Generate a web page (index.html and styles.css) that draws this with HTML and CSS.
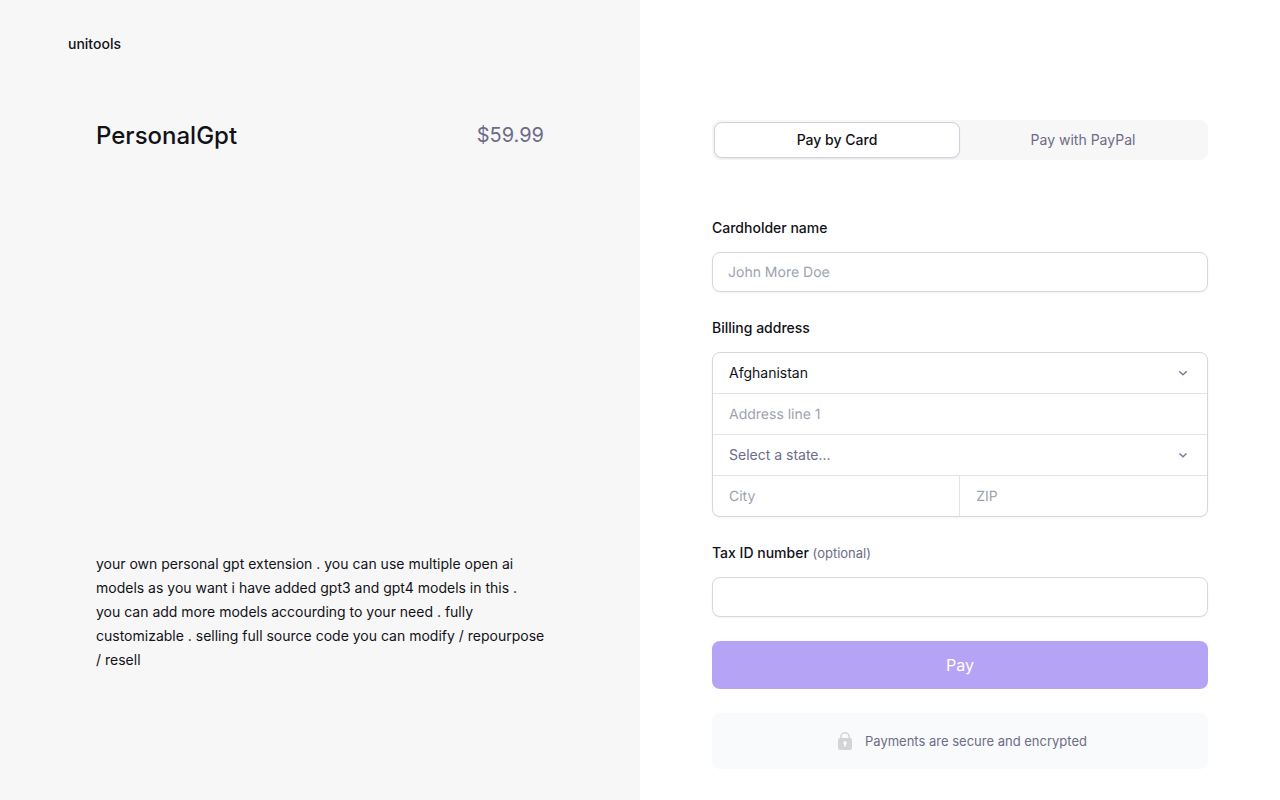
FILE: index.html
```html
<!DOCTYPE html>
<html lang="en">
<head>
    <meta charset="UTF-8">
    <meta name="viewport" content="width=device-width, initial-scale=1.0">
    <title>PersonalGpt - unitools</title>
    <link rel="stylesheet" href="styles.css">
</head>
<body>
    <div class="checkout">
        <section class="summary">
            <header class="brand">unitools</header>
            <div class="product">
                <div class="product-head">
                    <h1>PersonalGpt</h1>
                    <span class="price">$59.99</span>
                </div>
                <p class="description">your own personal gpt extension . you can use multiple open ai models as you want i have added gpt3 and gpt4 models in this .<br> you can add more models accourding to your need . fully customizable . selling full source code you can modify / repourpose / resell</p>
            </div>
        </section>
        <main class="payment">
            <div class="tabs">
                <button type="button" class="tab active">Pay by Card</button>
                <button type="button" class="tab">Pay with PayPal</button>
            </div>
            <form class="form">
                <div class="field">
                    <label for="name">Cardholder name</label>
                    <input type="text" id="name" class="input" placeholder="John More Doe">
                </div>
                <div class="field">
                    <label for="country">Billing address</label>
                    <div class="address">
                        <div class="select">
                            <select id="country">
                                <option>Afghanistan</option>
                                <option>Albania</option>
                                <option>Algeria</option>
                            </select>
                            <svg class="chevron" viewBox="0 0 10 10"><path d="M1.2 3.2 5 6.8 8.8 3.2"/></svg>
                        </div>
                        <input type="text" placeholder="Address line 1" aria-label="Address line 1">
                        <div class="select">
                            <select class="empty" aria-label="State">
                                <option>Select a state...</option>
                            </select>
                            <svg class="chevron" viewBox="0 0 10 10"><path d="M1.5 3.5 5 6.8 8.5 3.5"/></svg>
                        </div>
                        <div class="address-row">
                            <input type="text" class="city" placeholder="City" aria-label="City">
                            <input type="text" placeholder="ZIP" aria-label="ZIP">
                        </div>
                    </div>
                </div>
                <div class="field">
                    <label for="tax">Tax ID number <span class="optional">(optional)</span></label>
                    <input type="text" id="tax" class="input">
                </div>
                <button type="submit" class="pay">Pay</button>
            </form>
            <div class="secure">
                <svg class="lock" viewBox="0 0 20 20">
                    <path class="shackle" d="M7.8 8V6a4.2 4.2 0 0 1 8.4 0v2"/>
                    <rect class="lock-body" x="5" y="7" width="14" height="12" rx="2"/>
                    <path class="keyhole" d="M12 10.2a1.6 1.6 0 0 1 .8 3v2.4h-1.6v-2.4a1.6 1.6 0 0 1 .8-3z"/>
                </svg>
                <span>Payments are secure and encrypted</span>
            </div>
        </main>
    </div>
</body>
</html>
```

FILE: styles.css
```css
* {
    box-sizing: border-box;
}
body {
    margin: 0;
    font-family: Inter, sans-serif;
    font-size: 14px;
    line-height: 24px;
    color: #121217;
    background: white;
}
.checkout {
    display: grid;
    grid-template-columns: 1fr 1fr;
    min-height: 100vh;
}
.summary {
    background: #f7f7f7;
}
.brand {
    padding: 32px 68px;
    font-weight: 500;
}
.product {
    padding: 32px 96px;
}
.product-head {
    display: flex;
    justify-content: space-between;
    align-items: flex-start;
    margin-bottom: 400px;
}
h1 {
    margin: 0;
    font-size: 24px;
    line-height: 32px;
    font-weight: 500;
}
.price {
    font-size: 20px;
    line-height: 30px;
    color: #6c6c89;
}
.description {
    margin: 0 -4px 0 0;
}
.payment {
    padding: 120px 72px 24px;
}
button, input, select {
    font: inherit;
    color: inherit;
}
button {
    border: none;
    cursor: pointer;
}
.tabs {
    display: grid;
    grid-template-columns: 1fr 1fr;
    padding: 2px;
    background: #f7f7f7;
    border-radius: 8px;
}
.tab {
    height: 36px;
    border-radius: 8px;
    background: none;
    color: #6c6c89;
}
.tab.active {
    background: white;
    border: 1px solid #d1d1db;
    color: #121217;
    font-weight: 500;
    box-shadow: 0 1px 2px rgba(18, 18, 23, 0.06);
}
.form {
    display: flex;
    flex-direction: column;
    gap: 24px;
    margin: 56px 0 24px;
}
.field {
    display: flex;
    flex-direction: column;
    gap: 12px;
}
label {
    font-weight: 500;
}
.optional {
    font-size: 13px;
    font-weight: 400;
    color: #6c6c89;
}
input, select {
    width: 100%;
    height: 40px;
    padding: 0 16px;
    border: none;
    background: none;
    outline: none;
}
input {
    text-rendering: geometricPrecision;
}
input::placeholder {
    color: #9ca3af;
    opacity: 1;
}
.input, .address {
    border: 1px solid #d8d8dc;
    border-radius: 8px;
    background: white;
    box-shadow: 0 1px 2px rgba(18, 18, 23, 0.05);
}
.input {
    padding: 0 15px;
}
.address > * {
    display: block;
}
.address > * + * {
    border-top: 1px solid #e4e4e7;
    height: 41px;
}
.select {
    position: relative;
}
select {
    display: block;
    appearance: none;
}
.empty {
    color: #6c6c89;
}
.chevron {
    position: absolute;
    top: 15px;
    right: 19px;
    width: 10px;
    height: 10px;
    fill: none;
    stroke: #7d7d98;
    stroke-width: 1.5;
    pointer-events: none;
}
.address .address-row {
    display: flex;
}
.city {
    border-right: 1px solid #e4e4e7;
}
.pay {
    height: 48px;
    border-radius: 8px;
    background: #b5a3f5;
    color: white;
    font-size: 16px;
}
.secure {
    display: flex;
    justify-content: center;
    align-items: center;
    gap: 12px;
    padding: 16px;
    border-radius: 8px;
    background: #f9fafb;
    font-size: 13px;
    color: #6c6c89;
}
.lock {
    width: 20px;
    height: 20px;
}
.shackle {
    fill: none;
    stroke: #d4d4d4;
    stroke-width: 1.5;
}
.lock-body {
    fill: #d4d4d4;
}
.keyhole {
    fill: white;
}
```
